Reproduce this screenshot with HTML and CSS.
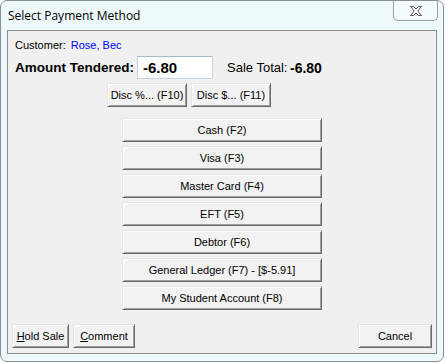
FILE: index.html
```html
<!DOCTYPE html>
<html>
<head>
<meta charset="utf-8">
<link rel="stylesheet" href="styles.css">
</head>
<body>
<div class="window">
  <div class="titlebar">
    <span class="title">Select Payment Method</span>
    <div class="close">
      <svg width="14" height="10" viewBox="0 0 14 10">
        <path d="M1.5 0.5 H4.5 L7 3 L9.5 0.5 H12.5 L8.8 5 L12.5 9.5 H9.5 L7 7 L4.5 9.5 H1.5 L5.2 5 Z" fill="#ffffff" stroke="#555" stroke-width="1" stroke-linejoin="round"/>
      </svg>
    </div>
  </div>
  <div class="client">
    <div class="customer">Customer:<span class="cust-name">Rose, Bec</span></div>
    <div class="amount-row">
      <span class="amount-label">Amount Tendered:</span>
      <div class="amount-input">-6.80</div>
      <span class="sale-label">Sale Total:</span>
      <span class="sale-value">-6.80</span>
    </div>
    <div class="disc-row">
      <button class="btn disc">Disc %... (F10)</button>
      <button class="btn disc">Disc $... (F11)</button>
    </div>
    <div class="methods">
      <button class="btn method">Cash (F2)</button>
      <button class="btn method">Visa (F3)</button>
      <button class="btn method">Master Card (F4)</button>
      <button class="btn method">EFT (F5)</button>
      <button class="btn method">Debtor (F6)</button>
      <button class="btn method">General Ledger (F7) - [$-5.91]</button>
      <button class="btn method">My Student Account (F8)</button>
    </div>
    <div class="bottom-row">
      <button class="btn hold"><u>H</u>old Sale</button>
      <button class="btn comment"><u>C</u>omment</button>
      <span class="spacer"></span>
      <button class="btn cancel">Cancel</button>
    </div>
  </div>
</div>
</body>
</html>
```

FILE: styles.css
```css
html, body {
  margin: 0;
  padding: 0;
  background: #ffffff;
}
body {
  width: 445px;
  height: 363px;
  overflow: hidden;
  font-family: "Liberation Sans", Arial, sans-serif;
}
.window {
  box-sizing: border-box;
  width: 444px;
  height: 362px;
  border: 1px solid #8a8f94;
  border-radius: 7px;
  background: #eef9fc;
  display: flex;
  flex-direction: column;
}
.titlebar {
  height: 28px;
  display: flex;
  justify-content: space-between;
  align-items: flex-start;
}
.title {
  font-family: "Open Sans", "Liberation Sans", sans-serif;
  font-size: 12px;
  color: #000;
  margin: 7px 0 0 7px;
  line-height: 16px;
}
.close {
  box-sizing: border-box;
  width: 45px;
  height: 20px;
  margin-right: 5px;
  border: 1px solid #9aa0a6;
  border-top: none;
  border-radius: 0 0 5px 5px;
  background: #f4fbfd;
  display: flex;
  justify-content: center;
  align-items: center;
}
.client {
  box-sizing: border-box;
  margin: 1px 0 0 6px;
  width: 430px;
  height: 324px;
  border: 1px solid #8f8f8f;
  background: #f0f0f0;
  padding: 0 4px 5px 4px;
  display: flex;
  flex-direction: column;
  font-size: 11px;
  color: #000;
}
.customer {
  margin: 7px 0 0 3px;
  height: 14px;
  line-height: 14px;
}
.cust-name {
  color: #0000ff;
  margin-left: 5px;
}
.amount-row {
  margin: 4px 0 0 3px;
  height: 23px;
  display: flex;
  align-items: center;
  white-space: nowrap;
}
.amount-label {
  font-weight: bold;
  font-size: 13.5px;
  width: 122px;
  flex-shrink: 0;
  overflow: hidden;
}
.amount-input {
  box-sizing: border-box;
  flex-shrink: 0;
  width: 76px;
  height: 23px;
  background: #fff;
  border: 1px solid #c4d4e4;
  border-top-color: #abb8c8;
  font-weight: bold;
  font-size: 15px;
  line-height: 21px;
  padding-left: 5px;
}
.sale-label {
  font-size: 13px;
  margin-left: 14px;
  width: 63px;
  flex-shrink: 0;
}
.sale-value {
  font-weight: bold;
  font-size: 14px;
}
.btn {
  box-sizing: border-box;
  font-family: "Liberation Sans", Arial, sans-serif;
  font-size: 11px;
  color: #000;
  height: 24px;
  padding: 0;
  margin: 0;
  background: #f2f2f2;
  border: 1px solid;
  border-color: #e6e6e6 #696969 #696969 #e6e6e6;
  box-shadow: inset 1px 1px 0 #ffffff, inset -1px -1px 0 #a0a0a0;
  border-radius: 0;
  white-space: nowrap;
}
.btn u {
  text-decoration: underline;
}
.disc-row {
  margin: 4px 0 0 95px;
  display: flex;
  gap: 4px;
}
.disc {
  width: 80px;
}
.methods {
  margin-top: 11px;
  display: flex;
  flex-direction: column;
  align-items: center;
  gap: 4px;
}
.method {
  width: 200px;
}
.bottom-row {
  margin-top: auto;
  display: flex;
  gap: 4px;
}
.spacer {
  flex: 1;
}
.hold {
  width: 57px;
}
.comment {
  width: 62px;
}
.cancel {
  width: 74px;
}
```
